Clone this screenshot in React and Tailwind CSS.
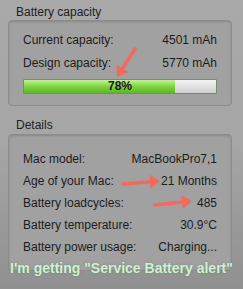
const Row = ({ label, value, className = "" }) => (
  <div className={"flex justify-between " + className}>
    <span>{label}</span>
    <span>{value}</span>
  </div>
);

const Arrow = ({ x1, y1, x2, y2 }) => {
  const a = Math.atan2(y2 - y1, x2 - x1);
  const L = 10;
  const W = 7;
  const bx = x2 - L * Math.cos(a);
  const by = y2 - L * Math.sin(a);
  const px = -Math.sin(a) * W;
  const py = Math.cos(a) * W;
  return (
    <g>
      <line x1={x1} y1={y1} x2={bx + Math.cos(a)} y2={by + Math.sin(a)} stroke="#f26a5c" strokeWidth="3.5" strokeLinecap="round" />
      <polygon points={`${x2},${y2} ${bx + px},${by + py} ${bx - px},${by - py}`} fill="#f26a5c" />
    </g>
  );
};

export default function App() {
  return (
    <div
      className="relative w-[243px] h-[289px] overflow-hidden bg-gradient-to-b from-[#a9a9a9] via-[#a6a6a6] to-[#909090] px-[8px] pt-[5px] text-[12px] leading-[16px] text-[#1c1c1c]"
      style={{ fontFamily: '"Liberation Sans", Arial, sans-serif' }}
    >
      <div className="ml-[8px] text-[12px] leading-[15px] text-[#222]">Battery capacity</div>
      <div className="h-[86px] w-[224px] rounded-[4px] border border-[#8c8c8c] bg-[#a1a1a1] px-[14px] pt-[11px] shadow-[inset_0_1px_2px_rgba(0,0,0,0.15)]">
        <Row label="Current capacity:" value="4501 mAh" />
        <Row label="Design capacity:" value="5770 mAh" className="mt-[7px]" />
        <div className="relative mt-[8px] flex h-[15px] w-[194px] overflow-hidden rounded-[1px] border border-[#7a8a70]">
          <div className="w-[151px] bg-gradient-to-b from-[#c4f09a] via-[#7fd43c] to-[#5db52a]" />
          <div className="flex-1 bg-gradient-to-b from-[#f4f4f4] via-[#e2e2e2] to-[#cfcfcf]" />
          <div className="absolute inset-0 flex items-center justify-center text-[12px] font-bold leading-[13px] text-[#1a1a1a]">
            78%
          </div>
        </div>
      </div>

      <div className="ml-[8px] mt-[11px] text-[12px] leading-[16px] text-[#222]">Details</div>
      <div className="mt-[1px] h-[137px] w-[224px] rounded-[4px] border border-[#8c8c8c] bg-[#a1a1a1] px-[14px] pt-[13px] leading-[22px] shadow-[inset_0_1px_2px_rgba(0,0,0,0.15)]">
        <Row label="Mac model:" value="MacBookPro7,1" />
        <Row label="Age of your Mac:" value="21 Months" />
        <Row label="Battery loadcycles:" value="485" />
        <Row label="Battery temperature:" value="30.9°C" />
        <Row label="Battery power usage:" value="Charging..." />
      </div>

      <div className="absolute left-0 right-0 top-[259px] text-center text-[14px] font-bold leading-[18px] text-[#cdf3cf] [text-shadow:0_0_2px_rgba(80,90,80,0.5)]">
        I'm getting "Service Battery alert"
      </div>

      <svg className="pointer-events-none absolute inset-0" width="243" height="289">
        <Arrow x1={135} y1={49} x2={117} y2={77} />
        <Arrow x1={123} y1={184} x2={160} y2={181} />
        <Arrow x1={155} y1={205} x2={192} y2={201} />
      </svg>
    </div>
  );
}
